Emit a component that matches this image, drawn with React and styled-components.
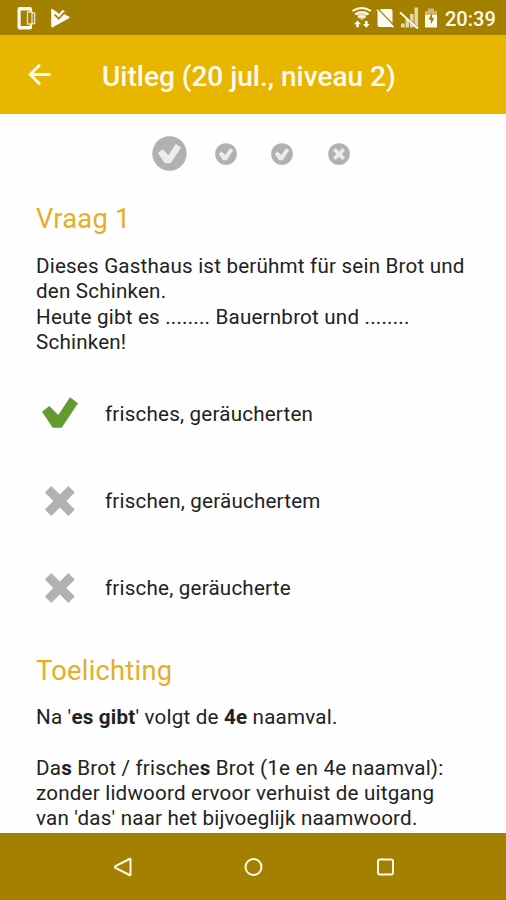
import React from "react";
import styled, { createGlobalStyle } from "styled-components";

const GlobalStyle = createGlobalStyle`
  * {
    box-sizing: border-box;
  }

  body {
    margin: 0;
    background-color: #fefefe;
    font-family: Roboto, sans-serif;
  }
`;

const Screen = styled.div`
  display: flex;
  flex-direction: column;
  width: 506px;
  height: 900px;
  overflow: hidden;
`;

const StatusBar = styled.div`
  display: flex;
  flex-shrink: 0;
  justify-content: space-between;
  height: 35px;
  padding-right: 10px;
  background-color: #a38000;
`;

const Clock = styled.div`
  width: 51px;
  margin-left: 5px;
  color: #fff8e8;
  font-size: 20px;
  font-weight: 500;
  line-height: 38px;
  white-space: nowrap;
`;

const StatusGroup = styled.div`
  display: flex;
`;

const AppBar = styled.div`
  display: flex;
  flex-shrink: 0;
  align-items: center;
  height: 79px;
  padding-left: 26px;
  background-color: #e8b500;
`;

const Title = styled.h1`
  margin: 0 0 0 49px;
  padding-top: 5px;
  color: #fffaf0;
  font-size: 28px;
  font-weight: 500;
  line-height: 32px;
  white-space: nowrap;
`;

const Content = styled.div`
  flex: 1;
  min-height: 0;
  padding: 0 36px;
  overflow: hidden;
`;

const Steps = styled.div`
  display: flex;
  justify-content: center;
  align-items: center;
  gap: 34.4px;
  height: 79px;
  padding-left: 2px;
`;

const StepIcon = styled.svg`
  flex-shrink: 0;
  width: ${(props) => (props.$active ? 35 : 22)}px;
  height: ${(props) => (props.$active ? 35 : 22)}px;
  margin: 0 ${(props) => (props.$active ? "-6.5px" : "0")};
`;

const Heading = styled.h2`
  margin: 0;
  padding-top: ${(props) => props.$top}px;
  color: #e6ae24;
  font-size: 27.3px;
  font-weight: 400;
  line-height: 32px;
  letter-spacing: 0.25px;
`;

const Text = styled.p`
  margin: 0;
  padding-top: ${(props) => props.$top}px;
  color: #222;
  font-size: 20.6px;
  line-height: 25.3px;
  letter-spacing: 0.2px;
  white-space: nowrap;
`;

const Answers = styled.div`
  padding-top: 15px;
`;

const Answer = styled.div`
  display: flex;
  align-items: center;
  height: 87.3px;
  color: #222;
  font-size: 20.6px;
  letter-spacing: 0.2px;
`;

const Mark = styled.div`
  display: flex;
  width: 69px;
  padding-left: 4px;
`;

const NavBar = styled.div`
  display: flex;
  flex-shrink: 0;
  justify-content: center;
  align-items: center;
  gap: 107.5px;
  height: 67px;
  background-color: #a38000;
`;

const CHECK =
  "M2 14.7 L9.3 9 L18.3 18 L30 .3 L38 6.3 L21.7 30.7 L12.7 30.7 Z";
const CROSS =
  "M8.5 2 L17 10.5 L25.5 2 L32 8.5 L23.5 17 L32 25.5 L25.5 32 L17 23.5 L8.5 32 L2 25.5 L10.5 17 L2 8.5 Z";

const CheckMark = () => (
  <svg width="40" height="34" viewBox="0 0 40 34">
    <path d={CHECK} fill="#639b2f" />
  </svg>
);

const CrossMark = () => (
  <svg width="40" height="34" viewBox="-2.8 0 40 34">
    <path d={CROSS} fill="#b1b1b1" />
  </svg>
);

const Step = ({ active, correct }) => (
  <StepIcon $active={active} viewBox="0 0 36 36">
    <circle cx="18" cy="18" r="17.7" fill="#b1b1b1" />
    {correct ? (
      <path d={CHECK} fill="#ececec" transform="translate(4.8 7.8) scale(.66)" />
    ) : (
      <path d={CROSS} fill="#ececec" transform="translate(6.8 6.8) scale(.66)" />
    )}
  </StepIcon>
);

const NotificationIcons = () => (
  <svg width="80" height="35" viewBox="0 0 80 35">
    <path
      d="M19.5 7h10.5q2 0 2 2v3h-2.2v-1.5H20.7v15.5h9.1v-2H32v3q0 2.5-2 2.5H19.5q-2 0-2-2.5V9q0-2 2-2z"
      fill="#fffaf0"
    />
    <path
      d="M32 13h2.6v10.5H32M32 12h-4.5v12H32z"
      fill="none"
      stroke="#eadfc3"
      strokeWidth="1.3"
    />
    <path
      d="M51.2 9.5q.1-1 1-.5l4.8 3 1.8 2 4-4.2 2.6 2-1 2.4 5 2.6q.8.6 0 1.2l-16.6 9.2q-1.6.8-1.6-.8z"
      fill="#fffaf0"
    />
    <path d="M54.5 14.5l4.2 4.2 6.2-6.8" fill="none" stroke="#a38000" strokeWidth="1.7" />
  </svg>
);

const SystemIcons = () => (
  <svg width="92" height="35" viewBox="348 0 92 35">
    <path d="M355 13q7-4 14 0l-7 7.5z" fill="#fffaf0" opacity=".65" />
    <g fill="none" stroke="#fffaf0" strokeWidth="2">
      <path d="M352.5 11q9-6 18.5 0" />
      <path d="M355 14.5q7-4.5 13.5 0" />
      <path d="M358 17.5q3.8-2.4 7.5 0" />
    </g>
    <path
      d="M357.5 20.5l3.4 3.7h-2.1v3h-2.6v-3h-2.1zM366.3 27.7l-3.4-3.7h2.1v-3h2.6v3h2.1z"
      fill="#fffaf0"
    />
    <path d="M381 9h9.5q2 0 2 2v16h-13q-2 0-2-2V12.5z" fill="#fffaf0" />
    <path d="M378.5 9.5l16.5 17" stroke="#a38000" strokeWidth="1.4" />
    <path d="M377 9.8l16.5 17.5" stroke="#fffaf0" strokeWidth="1.6" />
    <path
      d="M401 27.5v-4h3.6v4zM405.5 27.5V19h3.6v8.5zM410 27.5V14h3.6v13.5zM414.5 27.5V7.5h3.6v20z"
      fill="#e3d6ae"
    />
    <path d="M401.5 12.5l17 16" stroke="#a38000" strokeWidth="2" />
    <path d="M400 12.5l18 16" stroke="#fffaf0" strokeWidth="2" />
    <path d="M425 11h3V8.5h6V11h3v7h-12z" fill="#cdb978" />
    <path d="M425 15h12v11.5q0 1-1 1h-10q-1 0-1-1z" fill="#fffaf0" />
    <path d="M432 13l-3.6 6.8h2.4v4.8l3.6-6.8h-2.4z" fill="#a38000" />
  </svg>
);

const BackArrow = () => (
  <svg width="27" height="27" viewBox="0 0 27 27">
    <path
      d="M24.5 13.5H4M14 3.7l-9.8 9.8 9.8 9.8"
      fill="none"
      stroke="#fffaf0"
      strokeWidth="2.8"
    />
  </svg>
);

const NavIcon = ({ children }) => (
  <svg
    width="24"
    height="24"
    viewBox="0 0 24 24"
    fill="none"
    stroke="#fffaf0"
    strokeWidth="2"
    strokeLinejoin="round"
  >
    {children}
  </svg>
);

const steps = [
  { active: true, correct: true },
  { active: false, correct: true },
  { active: false, correct: true },
  { active: false, correct: false },
];

const answers = [
  { text: "frisches, geräucherten", correct: true },
  { text: "frischen, geräuchertem", correct: false },
  { text: "frische, geräucherte", correct: false },
];

const App = () => {
  return (
    <Screen>
      <GlobalStyle />
      <StatusBar>
        <NotificationIcons />
        <StatusGroup>
          <SystemIcons />
          <Clock>20:39</Clock>
        </StatusGroup>
      </StatusBar>
      <AppBar>
        <BackArrow />
        <Title>Uitleg (20 jul., niveau 2)</Title>
      </AppBar>
      <Content>
        <Steps>
          {steps.map((step, index) => (
            <Step key={index} active={step.active} correct={step.correct} />
          ))}
        </Steps>
        <Heading $top={10}>Vraag 1</Heading>
        <Text $top={19}>
          Dieses Gasthaus ist berühmt für sein Brot und
          <br />
          den Schinken.
          <br />
          Heute gibt es ........ Bauernbrot und ........
          <br />
          Schinken!
        </Text>
        <Answers>
          {answers.map((answer) => (
            <Answer key={answer.text}>
              <Mark>{answer.correct ? <CheckMark /> : <CrossMark />}</Mark>
              {answer.text}
            </Answer>
          ))}
        </Answers>
        <Heading $top={23}>Toelichting</Heading>
        <Text $top={18}>
          Na '<b>es gibt</b>' volgt de <b>4e</b> naamval.
          <br />
          <br />
          Da<b>s</b> Brot / frische<b>s</b> Brot (1e en 4e naamval):
          <br />
          zonder lidwoord ervoor verhuist de uitgang
          <br />
          van 'das' naar het bijvoeglijk naamwoord.
        </Text>
      </Content>
      <NavBar>
        <NavIcon>
          <path d="M20.5 4.5v15q0 1-1 .5L5.5 12.8q-1.2-.8 0-1.6L19.5 4q1-.5 1 .5z" />
        </NavIcon>
        <NavIcon>
          <circle cx="12.5" cy="12" r="8" />
        </NavIcon>
        <NavIcon>
          <rect x="5" y="4.5" width="15" height="15" rx="2" />
        </NavIcon>
      </NavBar>
    </Screen>
  );
};

export default App;
